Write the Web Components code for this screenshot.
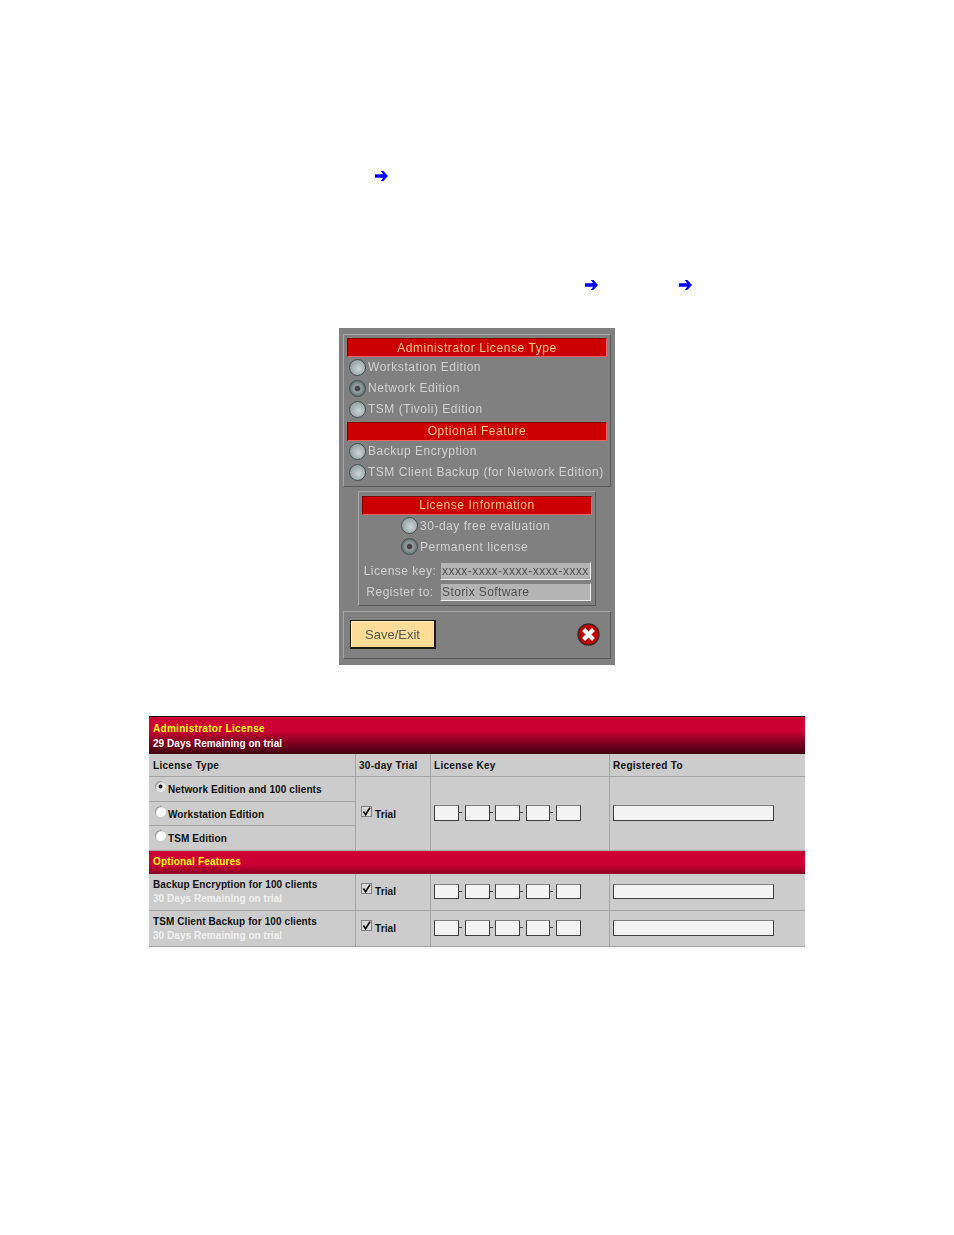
<!DOCTYPE html>
<html>
<head>
<meta charset="utf-8">
<title>Storix license</title>
<style>
  html, body { margin: 0; background: #fff; }
  body { width: 954px; height: 1235px; overflow: hidden; font-family: "Liberation Sans", Arial, sans-serif; }
</style>
</head>
<body>
<doc-page>
  <arrow-line style="--top:171px">
    <arrow-mark style="margin-left:375px"></arrow-mark>
  </arrow-line>
  <arrow-line style="--top:95px">
    <arrow-mark style="margin-left:585px"></arrow-mark>
    <arrow-mark style="margin-left:81px"></arrow-mark>
  </arrow-line>

  <admin-dialog>
    <dlg-panel style="--mx:4px;--h:153px;--pad:3px 3px 0">
      <dlg-title style="line-height:18px">Administrator License Type</dlg-title>
      <dlg-radio>Workstation Edition</dlg-radio>
      <dlg-radio checked>Network Edition</dlg-radio>
      <dlg-radio>TSM (Tivoli) Edition</dlg-radio>
      <dlg-title style="margin-top:2px">Optional Feature</dlg-title>
      <dlg-radio>Backup Encryption</dlg-radio>
      <dlg-radio>TSM Client Backup (for Network Edition)</dlg-radio>
    </dlg-panel>
    <dlg-panel style="--mx:19px;--h:115px;--pad:4px 3px 0;--top:4px">
      <dlg-title>License Information</dlg-title>
      <dlg-radio center>30-day free evaluation</dlg-radio>
      <dlg-radio center checked>Permanent license</dlg-radio>
      <dlg-field style="margin-top:3px" label="License key:" value="xxxx-xxxx-xxxx-xxxx-xxxx" masked></dlg-field>
      <dlg-field label="Register to:" value="Storix Software"></dlg-field>
    </dlg-panel>
    <dlg-actions></dlg-actions>
  </admin-dialog>

  <license-table>
    <lic-band slot="top" big>
      <span style="color:#ffff00">Administrator License</span>
      <span style="color:#fff">29 Days Remaining on trial</span>
    </lic-band>
    <lic-cell head first>License Type</lic-cell>
    <lic-cell head>30-day Trial</lic-cell>
    <lic-cell head>License Key</lic-cell>
    <lic-cell head last>Registered To</lic-cell>

    <lic-cell first><lic-radio checked>Network Edition and 100 clients</lic-radio></lic-cell>
    <lic-cell style="grid-row:span 3;padding-top:2px"><lic-trial></lic-trial></lic-cell>
    <lic-cell style="grid-row:span 3;padding-bottom:2px"><lic-key></lic-key></lic-cell>
    <lic-cell style="grid-row:span 3;padding-bottom:2px" last><lic-owner></lic-owner></lic-cell>
    <lic-cell first style="padding-top:1px"><lic-radio>Workstation Edition</lic-radio></lic-cell>
    <lic-cell first><lic-radio>TSM Edition</lic-radio></lic-cell>

    <lic-band style="grid-column:1 / -1"><span style="color:#ffff00">Optional Features</span></lic-band>

    <lic-cell first style="padding-bottom:2px">Backup Encryption for 100 clients<span slot="sub">30 Days Remaining on trial</span></lic-cell>
    <lic-cell style="padding-bottom:1px"><lic-trial></lic-trial></lic-cell>
    <lic-cell style="padding-bottom:2px"><lic-key style="--kh:15px"></lic-key></lic-cell>
    <lic-cell style="padding-bottom:2px" last><lic-owner style="--kh:15px"></lic-owner></lic-cell>

    <lic-cell first style="padding-bottom:0">TSM Client Backup for 100 clients<span slot="sub">30 Days Remaining on trial</span></lic-cell>
    <lic-cell><lic-trial></lic-trial></lic-cell>
    <lic-cell style="padding-bottom:2px"><lic-key></lic-key></lic-cell>
    <lic-cell style="padding-bottom:2px" last><lic-owner></lic-owner></lic-cell>
  </license-table>
</doc-page>

<script>
function simple(name, css, html) {
    customElements.define(name, class extends HTMLElement {
        constructor() {
            super();
            this.attachShadow({ mode: 'open' });
        }
        connectedCallback() {
            const body = typeof html === 'function' ? html(this) : html;
            this.shadowRoot.innerHTML = `<style>${css}</style>${body}`;
        }
    });
}

simple('doc-page', `:host { display: block; }`, `<slot></slot>`);

simple('arrow-line', `
  :host { display: flex; height: 14px; margin-top: var(--top, 0); }
`, `<slot></slot>`);

simple('arrow-mark', `
  :host { display: block; width: 13px; height: 10px; }
  svg { display: block; }
`, `<svg width="13" height="10" viewBox="0 0 13 10">
  <path d="M0 3.2H8.2L5.8 0H8.4L13 5 8.4 10H5.8L8.2 6.8H0Z" fill="#0000ff"/>
</svg>`);

simple('admin-dialog', `
  :host {
    display: block; box-sizing: border-box; width: 276px; height: 337px;
    margin: 34px 0 0 339px; padding-top: 6px; background: #808080;
    font: 12px "Liberation Sans", Arial, sans-serif; color: #d0d0d0;
    filter: blur(.3px);
  }
`, `<slot></slot>`);

simple('dlg-panel', `
  :host {
    display: block; box-sizing: border-box; height: var(--h);
    margin: var(--top, 0) var(--mx) 0; padding: var(--pad);
    border: 1px solid; border-color: #a8a8a8 #585858 #585858 #a8a8a8;
  }
`, `<slot></slot>`);

simple('dlg-title', `
  :host {
    display: block; box-sizing: border-box; height: 19px; line-height: 17px;
    background: #cc0000; color: #ffc880; text-align: center; letter-spacing: .58px;
    border: 1px solid; border-color: #800000 #f06060 #f06060 #800000;
  }
`, `<slot></slot>`);

simple('dlg-radio', `
  :host { display: flex; align-items: center; gap: 2px; height: 21px; padding-left: 2px; letter-spacing: .52px; white-space: nowrap; }
  :host([center]) { padding-left: 39px; }
  i {
    box-sizing: border-box; width: 17px; height: 17px; border-radius: 50%; flex: none;
    background: radial-gradient(circle at 58% 58%, #ccd6d6, #7f8c8c);
    border: 1px solid #405050;
  }
  :host([checked]) i { background: radial-gradient(circle, #444 0 2.2px, #98a2a2 3.4px, #6c7878 7px); }
  span { margin-top: -1px; }
  :host([center]) span { margin-top: 1px; }
`, `<i></i><span><slot></slot></span>`);

simple('dlg-field', `
  :host { display: grid; grid-template-columns: 78px 151px; align-items: center; height: 21px; letter-spacing: .5px; }
  label { text-align: center; white-space: nowrap; padding-right: 2px; }
  div {
    box-sizing: border-box; height: 18px; line-height: 16px; padding-left: 1px; overflow: hidden; white-space: nowrap;
    background: #b4b4b4; color: #505050;
    border: 1px solid; border-color: #808080 #f0f0f0 #f0f0f0 #808080;
    letter-spacing: .4px;
  }
  :host([masked]) div { letter-spacing: .45px; }
`, el => `<label>${el.getAttribute('label')}</label><div>${el.getAttribute('value')}</div>`);

simple('dlg-actions', `
  :host {
    display: flex; align-items: center; justify-content: space-between; box-sizing: border-box;
    height: 48px; margin: 5px 4px 0; padding: 0 10px 2px 6px;
    border: 1px solid; border-color: #a8a8a8 #585858 #585858 #a8a8a8;
  }
  button {
    box-sizing: border-box; width: 86px; height: 29px; padding: 1px 0 0;
    background: #ffdd99; color: #555; font: 13px "Liberation Sans", Arial, sans-serif;
    border: 1px solid #1c1c10; border-right-width: 2px; border-bottom-width: 2px;
    box-shadow: inset 1px 1px 0 #fff0c8;
  }
  svg { display: block; }
`, `<button>Save/Exit</button>
<svg width="23" height="23" viewBox="0 0 23 23">
  <circle cx="11.5" cy="11.5" r="10.5" fill="#c00000" stroke="#402828" stroke-width="1.4"/>
  <path d="M6.6 6.6 16.4 16.4M16.4 6.6 6.6 16.4" stroke="#fff" stroke-width="4.2"/>
</svg>`);

simple('license-table', `
  :host {
    display: block; width: 656px; margin: 51px 0 0 149px;
    font: bold 10px "Liberation Sans", Arial, sans-serif; color: #101010; letter-spacing: .1px;
  }
  .grid {
    display: grid; grid-template-columns: 207px 75px 179px 195px;
    grid-template-rows: 23px 25px 24px 25px 23px 37px 36px;
    background: #cccccc;
  }
`, `<slot name="top"></slot><div class="grid"><slot></slot></div>`);

simple('lic-band', `
  :host {
    display: flex; align-items: center; box-sizing: border-box; padding: 0 0 2px 4px; letter-spacing: .18px;
    background: linear-gradient(#cc0033 0 60%, #880022 100%);
  }
  :host([big]) {
    flex-direction: column; align-items: flex-start; justify-content: center; gap: 4px; height: 38px;
    padding-bottom: 0;
    border-top: 1px solid #101010; letter-spacing: .05px;
    background: linear-gradient(#cc0033 0 35%, #400010 100%);
  }
  :host([big]) ::slotted(:first-child) { letter-spacing: .3px; }
`, `<slot></slot>`);

simple('lic-cell', `
  :host {
    display: flex; flex-direction: column; justify-content: center; box-sizing: border-box;
    padding: 0 0 0 3px; border-right: 1px solid #a4a4a4; border-bottom: 1px solid #a4a4a4;
    white-space: nowrap;
  }
  :host([first]) { padding-left: 4px; }
  :host([head]) { letter-spacing: .3px; }
  :host([last]) { border-right: 0; }
  ::slotted([slot=sub]) { color: #f0f0f0; margin-top: 3px; letter-spacing: .05px; }
`, `<div><slot></slot></div><slot name="sub"></slot>`);

simple('lic-radio', `
  :host { display: flex; align-items: center; gap: 2px; }
  i {
    box-sizing: border-box; width: 11px; height: 11px; border-radius: 50%; margin: -5px 0 0 2px; flex: none;
    background: #fff; box-shadow: inset 1px 1px 1px #909090;
  }
  :host([checked]) i { background: radial-gradient(circle, #202020 0 1.6px, #e8e8e8 2.4px); }
`, `<i></i><span><slot></slot></span>`);

simple('lic-trial', `
  :host { display: flex; align-items: flex-start; gap: 3px; margin-left: 2px; height: 17px; }
  svg { display: block; }
  span { margin-top: 3px; }
`, `<svg width="11" height="11" viewBox="0 0 11 11">
  <rect x=".5" y=".5" width="10" height="10" fill="#d8d8d8" stroke="#808080"/>
  <path d="M2.4 5.4 4.6 8.6 9 1.6" fill="none" stroke="#101010" stroke-width="1.7"/>
</svg><span>Trial</span>`);

simple('lic-key', `
  :host { display: flex; align-items: center; }
  i {
    box-sizing: border-box; display: block; width: 25px; height: var(--kh, 16px); background: #f4f4f4;
    border: 1px solid #404040; border-top-color: #808080;
  }
  b { display: block; width: 6px; height: 1px; background: linear-gradient(90deg, #404040 0 3px, transparent 3px); }
`, `<i></i><b></b><i></i><b style="width:5px"></b><i></i><b></b><i style="width:24px"></i><b></b><i></i>`);

simple('lic-owner', `
  :host {
    display: block; box-sizing: border-box; width: 161px; height: var(--kh, 16px); background: #f4f4f4;
    border: 1px solid #404040; border-top-color: #808080;
  }
`, ``);
</script>
</body>
</html>
